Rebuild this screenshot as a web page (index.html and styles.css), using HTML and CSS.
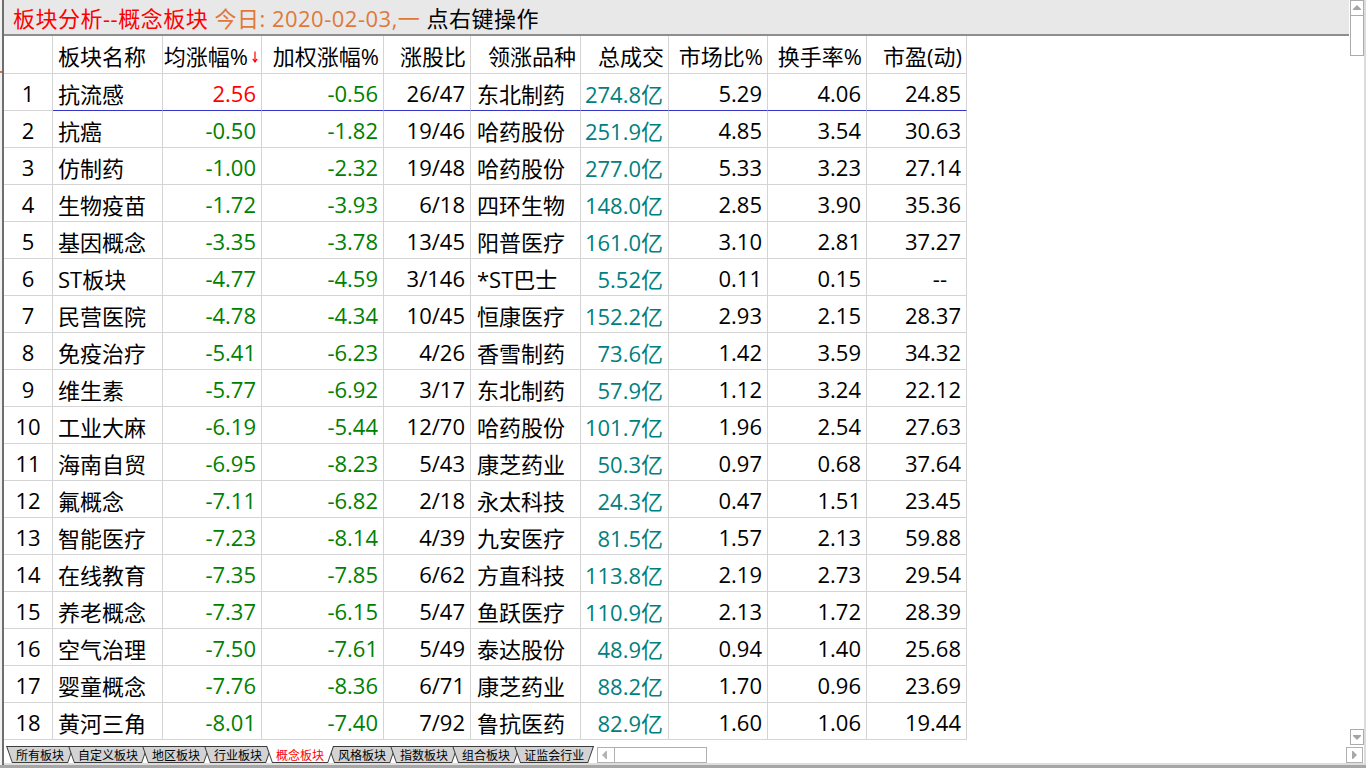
FILE: index.html
```html
<!DOCTYPE html>
<html lang="zh-CN">
<head>
<meta charset="utf-8">
<title>板块分析--概念板块</title>
<link rel="stylesheet" href="styles.css">
</head>
<body>
<div class="window">
  <div class="frame">
    <div class="edge-left"><span class="edge-mark"></span></div>
    <div class="middle">
      <div class="upper">
        <div class="content">
          <div class="titlebar"><span class="t-red">板块分析--概念板块</span><span class="t-orange"> 今日: 2020-02-03,一</span><span class="t-black"> 点右键操作</span></div>
          <div class="grid">
            <div class="row head">
              <div class="c idx"></div>
              <div class="c left">板块名称</div>
              <div class="c sorted">均涨幅%<svg class="sort-arrow" width="6" height="12" viewBox="0 0 6 12"><path d="M3 0.5V10.5M0.8 7.8L3 11L5.2 7.8" fill="none" stroke="#ff0000" stroke-width="1.2"/></svg></div>
              <div class="c">加权涨幅%</div>
              <div class="c">涨股比</div>
              <div class="c">领涨品种</div>
              <div class="c">总成交</div>
              <div class="c">市场比%</div>
              <div class="c">换手率%</div>
              <div class="c">市盈(动)</div>
            </div>
            <div class="row sel">
              <div class="c idx">1</div><div class="c left">抗流感</div><div class="c r">2.56</div><div class="c g">-0.56</div><div class="c">26/47</div><div class="c lead">东北制药</div><div class="c t">274.8亿</div><div class="c">5.29</div><div class="c">4.06</div><div class="c">24.85</div>
            </div>
            <div class="row">
              <div class="c idx">2</div><div class="c left">抗癌</div><div class="c g">-0.50</div><div class="c g">-1.82</div><div class="c">19/46</div><div class="c lead">哈药股份</div><div class="c t">251.9亿</div><div class="c">4.85</div><div class="c">3.54</div><div class="c">30.63</div>
            </div>
            <div class="row">
              <div class="c idx">3</div><div class="c left">仿制药</div><div class="c g">-1.00</div><div class="c g">-2.32</div><div class="c">19/48</div><div class="c lead">哈药股份</div><div class="c t">277.0亿</div><div class="c">5.33</div><div class="c">3.23</div><div class="c">27.14</div>
            </div>
            <div class="row">
              <div class="c idx">4</div><div class="c left">生物疫苗</div><div class="c g">-1.72</div><div class="c g">-3.93</div><div class="c">6/18</div><div class="c lead">四环生物</div><div class="c t">148.0亿</div><div class="c">2.85</div><div class="c">3.90</div><div class="c">35.36</div>
            </div>
            <div class="row">
              <div class="c idx">5</div><div class="c left">基因概念</div><div class="c g">-3.35</div><div class="c g">-3.78</div><div class="c">13/45</div><div class="c lead">阳普医疗</div><div class="c t">161.0亿</div><div class="c">3.10</div><div class="c">2.81</div><div class="c">37.27</div>
            </div>
            <div class="row">
              <div class="c idx">6</div><div class="c left">ST板块</div><div class="c g">-4.77</div><div class="c g">-4.59</div><div class="c">3/146</div><div class="c lead">*ST巴士</div><div class="c t">5.52亿</div><div class="c">0.11</div><div class="c">0.15</div><div class="c na">--</div>
            </div>
            <div class="row">
              <div class="c idx">7</div><div class="c left">民营医院</div><div class="c g">-4.78</div><div class="c g">-4.34</div><div class="c">10/45</div><div class="c lead">恒康医疗</div><div class="c t">152.2亿</div><div class="c">2.93</div><div class="c">2.15</div><div class="c">28.37</div>
            </div>
            <div class="row">
              <div class="c idx">8</div><div class="c left">免疫治疗</div><div class="c g">-5.41</div><div class="c g">-6.23</div><div class="c">4/26</div><div class="c lead">香雪制药</div><div class="c t">73.6亿</div><div class="c">1.42</div><div class="c">3.59</div><div class="c">34.32</div>
            </div>
            <div class="row">
              <div class="c idx">9</div><div class="c left">维生素</div><div class="c g">-5.77</div><div class="c g">-6.92</div><div class="c">3/17</div><div class="c lead">东北制药</div><div class="c t">57.9亿</div><div class="c">1.12</div><div class="c">3.24</div><div class="c">22.12</div>
            </div>
            <div class="row">
              <div class="c idx">10</div><div class="c left">工业大麻</div><div class="c g">-6.19</div><div class="c g">-5.44</div><div class="c">12/70</div><div class="c lead">哈药股份</div><div class="c t">101.7亿</div><div class="c">1.96</div><div class="c">2.54</div><div class="c">27.63</div>
            </div>
            <div class="row">
              <div class="c idx">11</div><div class="c left">海南自贸</div><div class="c g">-6.95</div><div class="c g">-8.23</div><div class="c">5/43</div><div class="c lead">康芝药业</div><div class="c t">50.3亿</div><div class="c">0.97</div><div class="c">0.68</div><div class="c">37.64</div>
            </div>
            <div class="row">
              <div class="c idx">12</div><div class="c left">氟概念</div><div class="c g">-7.11</div><div class="c g">-6.82</div><div class="c">2/18</div><div class="c lead">永太科技</div><div class="c t">24.3亿</div><div class="c">0.47</div><div class="c">1.51</div><div class="c">23.45</div>
            </div>
            <div class="row">
              <div class="c idx">13</div><div class="c left">智能医疗</div><div class="c g">-7.23</div><div class="c g">-8.14</div><div class="c">4/39</div><div class="c lead">九安医疗</div><div class="c t">81.5亿</div><div class="c">1.57</div><div class="c">2.13</div><div class="c">59.88</div>
            </div>
            <div class="row">
              <div class="c idx">14</div><div class="c left">在线教育</div><div class="c g">-7.35</div><div class="c g">-7.85</div><div class="c">6/62</div><div class="c lead">方直科技</div><div class="c t">113.8亿</div><div class="c">2.19</div><div class="c">2.73</div><div class="c">29.54</div>
            </div>
            <div class="row">
              <div class="c idx">15</div><div class="c left">养老概念</div><div class="c g">-7.37</div><div class="c g">-6.15</div><div class="c">5/47</div><div class="c lead">鱼跃医疗</div><div class="c t">110.9亿</div><div class="c">2.13</div><div class="c">1.72</div><div class="c">28.39</div>
            </div>
            <div class="row">
              <div class="c idx">16</div><div class="c left">空气治理</div><div class="c g">-7.50</div><div class="c g">-7.61</div><div class="c">5/49</div><div class="c lead">泰达股份</div><div class="c t">48.9亿</div><div class="c">0.94</div><div class="c">1.40</div><div class="c">25.68</div>
            </div>
            <div class="row">
              <div class="c idx">17</div><div class="c left">婴童概念</div><div class="c g">-7.76</div><div class="c g">-8.36</div><div class="c">6/71</div><div class="c lead">康芝药业</div><div class="c t">88.2亿</div><div class="c">1.70</div><div class="c">0.96</div><div class="c">23.69</div>
            </div>
            <div class="row">
              <div class="c idx">18</div><div class="c left">黄河三角</div><div class="c g">-8.01</div><div class="c g">-7.40</div><div class="c">7/92</div><div class="c lead">鲁抗医药</div><div class="c t">82.9亿</div><div class="c">1.60</div><div class="c">1.06</div><div class="c">19.44</div>
            </div>
          </div>
        </div>
        <div class="vscroll">
          <div class="sbtn"><span class="tri-up"></span></div>
          <div class="vthumb"></div>
          <div class="vtrack"></div>
          <div class="sbtn"><span class="tri-down"></span></div>
        </div>
      </div>
      <div class="lower">
        <div class="tabs">
          <div class="tab">所有板块</div>
          <div class="tab">自定义板块</div>
          <div class="tab">地区板块</div>
          <div class="tab">行业板块</div>
          <div class="tab active">概念板块</div>
          <div class="tab">风格板块</div>
          <div class="tab">指数板块</div>
          <div class="tab">组合板块</div>
          <div class="tab last">证监会行业</div>
        </div>
        <div class="hscroll">
          <div class="hbtn"><span class="tri-left"></span></div>
          <div class="hthumb"></div>
          <div class="htrack"></div>
          <div class="hbtn right"><span class="tri-right"></span></div>
        </div>
      </div>
      <div class="strip-light"></div>
    </div>
    <div class="edge-right"></div>
  </div>
  <div class="bottombar"></div>
</div>
</body>
</html>
```

FILE: styles.css
```css
* { box-sizing: border-box; }
html, body { margin: 0; padding: 0; }
body {
  width: 1366px;
  height: 768px;
  overflow: hidden;
  background: #ffffff;
  font-family: "Open Sans", "Noto Sans CJK SC", sans-serif;
  color: #000;
}
.window { display: flex; flex-direction: column; height: 768px; }
.frame { display: flex; height: 765px; }
.edge-left {
  width: 4px;
  background: #f2f2f2;
  border-right: 2px solid #6e6e6e;
  display: flex;
  flex-direction: column;
}
.edge-mark { width: 2px; height: 2px; margin-top: 71px; background: #e07030; }
.edge-right { width: 2px; background: #dcdcdc; }
.middle { flex: 1; display: flex; flex-direction: column; min-width: 0; }
.upper { display: flex; height: 745px; }
.content { flex: 1; display: flex; flex-direction: column; min-width: 0; }

.titlebar {
  height: 36px;
  flex: none;
  background: #e8e8e8;
  border-bottom: 2px solid #8e8e8e;
  padding-left: 9px;
  display: flex;
  align-items: center;
  font-size: 22px;
  letter-spacing: 0.5px;
  white-space: pre;
}
.t-red { color: #ff0000; }
.t-orange { color: #e0783a; }
.t-black { color: #000; }

.grid {
  display: grid;
  grid-template-columns: 49px 110px 99px 122px 87px 110px 88px 99px 99px 100px;
  grid-template-rows: 38px;
  grid-auto-rows: 37px;
  width: 963px;
}
.row { display: contents; }
.c {
  border-right: 1px solid #d4d4d4;
  border-bottom: 1px solid #d4d4d4;
  font-size: 22px;
  display: flex;
  align-items: center;
  justify-content: flex-end;
  padding: 1px 5px 0 5px;
  white-space: nowrap;
  overflow: hidden;
}
.head .c { padding-right: 4px; }
.c.idx { justify-content: center; padding-left: 0; padding-right: 0; }
.c.left { justify-content: flex-start; }
.c.lead { justify-content: flex-start; padding-left: 6px; }
.c.na { padding-right: 19px; }
.c.r { color: #ff0000; }
.c.g { color: #008000; }
.c.t { color: #008080; }
.head .c.sorted { padding-right: 3px; }
.sort-arrow { align-self: flex-start; margin-top: 14px; margin-left: 4px; flex: none; }
.sel .c:not(.idx) { border-bottom-color: #3434c8; }

/* vertical scrollbar */
.vscroll {
  width: 15px;
  flex: none;
  display: flex;
  flex-direction: column;
  padding-left: 1px;
}
.sbtn {
  height: 16px;
  flex: none;
  border: 1px solid #ababab;
  display: flex;
  align-items: center;
  justify-content: center;
}
.vthumb { height: 40px; flex: none; border: 1px solid #ababab; border-top: none; }
.vtrack { flex: 1; }
.tri-up {
  width: 0; height: 0;
  border-left: 4px solid transparent;
  border-right: 4px solid transparent;
  border-bottom: 4px solid #a4a4a4;
  box-shadow: 0 1px 0 0 #a4a4a4;
  margin-top: -2px;
}
.tri-down {
  width: 0; height: 0;
  border-left: 4px solid transparent;
  border-right: 4px solid transparent;
  border-top: 4px solid #a4a4a4;
  box-shadow: 0 -1px 0 0 #a4a4a4;
  margin-top: 1px;
}

/* bottom strip */
.lower { display: flex; height: 18px; flex: none; }
.tabs { display: flex; padding-left: 2px; margin-top: 1px; height: 17px; }
.tab {
  position: relative;
  z-index: 0;
  height: 17px;
  padding: 0 10px;
  margin-right: -6px;
  font-family: "Noto Sans CJK SC", sans-serif;
  font-size: 12px;
  line-height: 17px;
  color: #000;
  white-space: nowrap;
}
.tab.last { margin-right: 0; }
.tab::before,
.tab::after {
  content: "";
  position: absolute;
  inset: 0;
  z-index: -1;
}
.tab::before {
  background: #3c3c3c;
  clip-path: polygon(0 0, 100% 0, calc(100% - 6px) 100%, 6px 100%);
}
.tab::after {
  background: #d3d3d3;
  clip-path: polygon(1.4px 1px, calc(100% - 1.4px) 1px, calc(100% - 6.6px) calc(100% - 1px), 6.6px calc(100% - 1px));
}
.tab.active { z-index: 1; color: #ff0000; }
.tab.active::after {
  background: #ffffff;
  clip-path: polygon(1.1px 0, calc(100% - 1.1px) 0, calc(100% - 6.6px) calc(100% - 1px), 6.6px calc(100% - 1px));
}

.hscroll { flex: 1; display: flex; height: 16px; margin-top: 2px; margin-left: 3px; padding-right: 1px; }
.hbtn {
  width: 18px;
  flex: none;
  border: 1px solid #b0b0b0;
  display: flex;
  align-items: center;
  justify-content: center;
}
.hbtn.right { width: 17px; }
.hthumb { width: 92px; flex: none; border: 1px solid #b0b0b0; border-left: none; }
.htrack { flex: 1; }
.tri-left {
  width: 0; height: 0;
  border-top: 4px solid transparent;
  border-bottom: 4px solid transparent;
  border-right: 4px solid #b4b4b4;
  box-shadow: 1px 0 0 0 #b4b4b4;
  margin-left: -4px;
}
.tri-right {
  width: 0; height: 0;
  border-top: 4px solid transparent;
  border-bottom: 4px solid transparent;
  border-left: 4px solid #a8a8a8;
  box-shadow: -1px 0 0 0 #a8a8a8;
  margin-left: 0;
}
.strip-light { height: 2px; flex: none; background: #dedede; }
.bottombar { height: 3px; background: #a6a6a6; }
```
